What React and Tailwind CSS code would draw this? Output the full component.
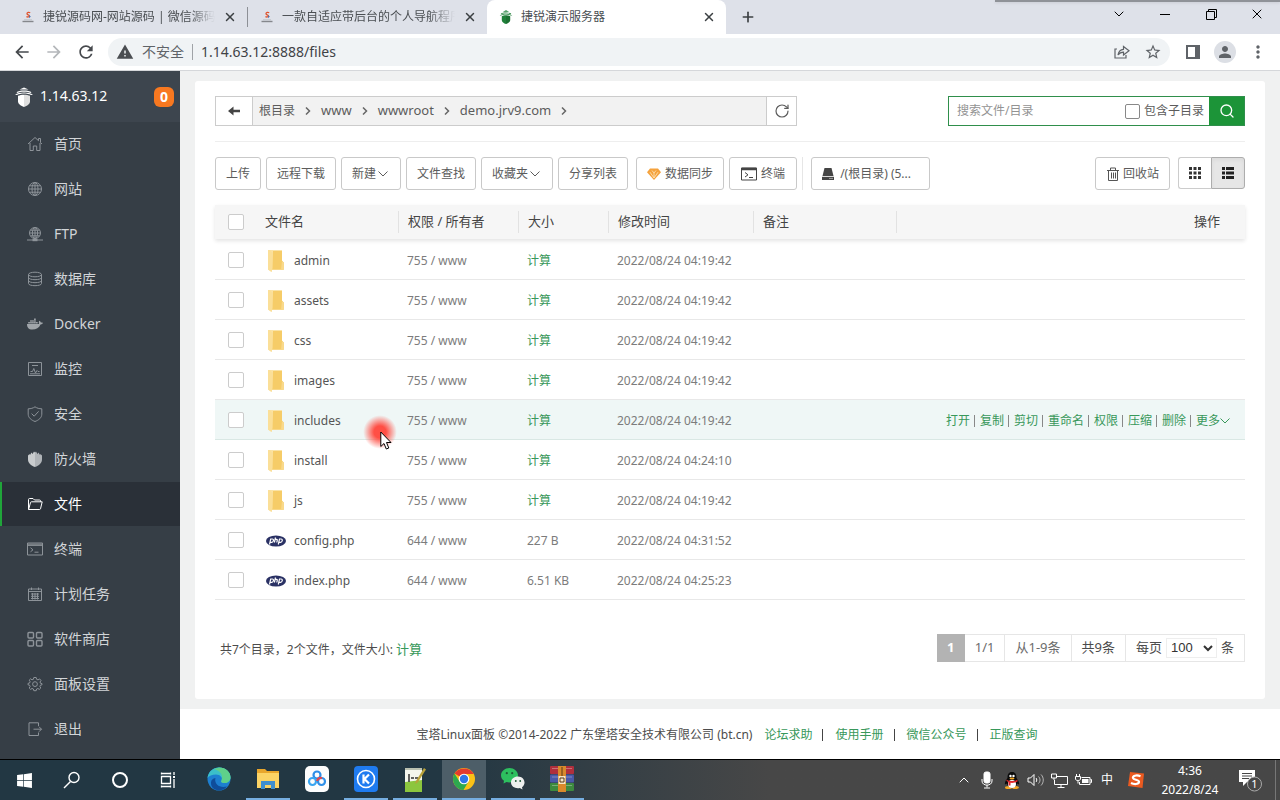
import { useState } from "react";
import { FaDocker, FaWindows } from "react-icons/fa";
import {
  MdArrowBack,
  MdArrowForward,
  MdRefresh,
  MdWarning,
  MdStarBorder,
  MdPerson,
  MdMoreVert,
} from "react-icons/md";
import { ChevronDown, ChevronUp, Plus, RotateCw, Search, X } from "lucide-react";

/* ---------- data ---------- */

const menu = [
  { name: "首页", icon: "home" },
  { name: "网站", icon: "globe" },
  { name: "FTP", icon: "ftp" },
  { name: "数据库", icon: "database" },
  { name: "Docker", icon: "docker" },
  { name: "监控", icon: "monitor" },
  { name: "安全", icon: "shield" },
  { name: "防火墙", icon: "firewall" },
  { name: "文件", icon: "folder" },
  { name: "终端", icon: "terminal" },
  { name: "计划任务", icon: "calendar" },
  { name: "软件商店", icon: "apps" },
  { name: "面板设置", icon: "gear" },
  { name: "退出", icon: "exit" },
];

const files = [
  { name: "admin", dir: true, perm: "755 / www", time: "2022/08/24 04:19:42" },
  { name: "assets", dir: true, perm: "755 / www", time: "2022/08/24 04:19:42" },
  { name: "css", dir: true, perm: "755 / www", time: "2022/08/24 04:19:42" },
  { name: "images", dir: true, perm: "755 / www", time: "2022/08/24 04:19:42" },
  { name: "includes", dir: true, perm: "755 / www", time: "2022/08/24 04:19:42" },
  { name: "install", dir: true, perm: "755 / www", time: "2022/08/24 04:24:10" },
  { name: "js", dir: true, perm: "755 / www", time: "2022/08/24 04:19:42" },
  { name: "config.php", perm: "644 / www", size: "227 B", time: "2022/08/24 04:31:52" },
  { name: "index.php", perm: "644 / www", size: "6.51 KB", time: "2022/08/24 04:25:23" },
];

const actions = ["打开", "复制", "剪切", "重命名", "权限", "压缩", "删除", "更多"];
const path = ["根目录", "www", "wwwroot", "demo.jrv9.com"];
const footerLinks = ["论坛求助", "使用手册", "微信公众号", "正版查询"];

/* ---------- icons ---------- */

const menuPaths = {
  home: <path d="M1 8 8 1.5 11.5 4.7V2.5H13.5V6.6L15 8M3 7V14.5H6.3V10H9.7V14.5H13V7" />,
  globe: (
    <>
      <circle cx="8" cy="8" r="6.5" />
      <ellipse cx="8" cy="8" rx="3" ry="6.5" />
      <path d="M8 1.5V14.5M1.5 8H14.5M2.5 4.8H13.5M2.5 11.2H13.5" />
    </>
  ),
  ftp: (
    <>
      <circle cx="8" cy="7" r="5.5" />
      <ellipse cx="8" cy="7" rx="2.6" ry="5.5" />
      <path d="M8 1.5V12.5M2.5 7H13.5M3.5 4.2H12.5M3.5 9.8H12.5M0 14H16" />
      <path d="M5.5 14H10.5" strokeWidth="2.4" />
    </>
  ),
  database: (
    <>
      <ellipse cx="8" cy="3.5" rx="6.5" ry="2.3" />
      <path d="M1.5 3.5V12.5C1.5 15.4 14.5 15.4 14.5 12.5V3.5M1.5 6.5C1.5 9.4 14.5 9.4 14.5 6.5M1.5 9.5C1.5 12.4 14.5 12.4 14.5 9.5" />
    </>
  ),
  monitor: <path d="M1.5 1.5H14.5V14.5H1.5ZM5 4.5H11M3.500 10.500H5.500L6.800 7.500 8.500 12 10 9.500 11 10.500H12.500M3 12.800H13" />,
  shield: <path d="M8 .8C6 2.200 3.800 2.800 1.200 2.800V8.200C1.200 11.800 4.500 14.200 8 15.500 11.500 14.200 14.800 11.800 14.800 8.200V2.800C12.200 2.800 10 2.200 8 .8ZM4.600 7.600 7.200 10.200 11.600 5.400" />,
  firewall: (
    <g stroke="none">
      <path fill="#c9ccce" d="M1 4.500 2.500 3 3 4 4.500 1.500 5.500 3 7 .5 8 1.500V16C4 14.500 1 12 1 8.500Z" />
      <path fill="#b0b4b8" d="M15 4.500 13.500 3 13 4 11.500 1.500 10.500 3 9 .5 8 1.500V16C12 14.500 15 12 15 8.500Z" />
    </g>
  ),
  folder: <path d="M1.5 13.500V3.500C1.500 2.800 2 2.500 2.500 2.500H6L7.500 4H12.500C13.300 4 13.600 4.500 13.600 5V5.800M1.600 13.500 3.500 6.500C3.700 6 4 5.800 4.500 5.800H15.200L13.500 12.800C13.300 13.300 13 13.500 12.500 13.500Z" />,
  terminal: <path d="M.5 2H15.500V14H.5ZM.5 3.200H15.500M.5 4.400H15.500M3.500 6.800 6 8.800 3.500 10.800M7.500 11.200H11.500" />,
  calendar: <path d="M1.500 3H14.500V14.500H1.500ZM1.500 5.500H14.500M4.500 1.500V4M11.500 1.500V4M4 8H12M4 10.300H12M4 12.500H12M5.500 7V13.500M8 7V13.500M10.500 7V13.500" />,
  apps: (
    <g strokeWidth="1.4">
      <rect x="1" y="1.500" width="5.500" height="5.500" rx="1" />
      <rect x="9.500" y="1.500" width="5.500" height="5.500" rx="1" />
      <rect x="1" y="9.500" width="5.500" height="5.500" rx="1" />
      <rect x="9.500" y="9.500" width="5.500" height="5.500" rx="1" />
    </g>
  ),
  gear: (
    <>
      <path d="M6.800 1.500H9.200L9.600 3.300 11 3.900 12.600 2.900 14 4.500 13 6 13.400 7.200 15 7.600V8.800L13.400 9.200 12.900 10.500 13.800 12 12.300 13.400 10.900 12.500 9.600 13 9.200 14.700H6.800L6.400 13 5 12.500 3.600 13.400 2.200 12 3.100 10.500 2.600 9.200 1 8.800V7.400L2.600 7 3.100 5.600 2.200 4.200 3.600 2.800 5 3.800 6.400 3.300Z" />
      <circle cx="8" cy="8.100" r="2.400" />
    </>
  ),
  exit: <path d="M11.500 5V1.800H2V14.500H11.500V11.500M6.500 8.200H14.500M12 5.700 14.500 8.200 12 10.700" />,
};

const MenuIcon = ({ name }) => {
  if (name === "docker") return <FaDocker className="size-4 shrink-0 text-[#a0a5aa]" />;
  return (
    <svg
      viewBox="0 0 16 16"
      fill="none"
      stroke="currentColor"
      strokeWidth="1"
      className="size-4 shrink-0"
    >
      {menuPaths[name]}
    </svg>
  );
};

const Logo = ({ className }) => (
  <svg viewBox="0 0 18 20" className={className} fill="currentColor">
    <path d="M9 .5 13.500 2.600H4.500Z" />
    <path d="M1.500 5.200C4 2.900 14 2.900 16.500 5.200L15.500 5.900C13 4.300 5 4.300 2.500 5.900Z" />
    <path d="M0 7.800C4 4.600 14 4.600 18 7.800L16 8C12.500 6 5.500 6 2 8Z" />
    <path d="M3 8.800C6 7.300 12 7.300 15 8.800V14.500C15 16.800 12 18.900 9 20 6 18.900 3 16.800 3 14.500Z" />
    <path d="M9 7.700V20C12 18.900 15 16.800 15 14.500V8.800C13 7.900 11 7.700 9 7.700Z" fill="#000" opacity=".12" />
  </svg>
);

const SiteIcon = () => (
  <svg viewBox="0 0 14 14" className="size-3.5 shrink-0">
    <path d="M9.200 2.800C8 2 6 2.300 6 3.700 6 4.900 8.400 4.700 8.400 6 8.300 7.200 6.700 7.200 5.400 6.600" fill="none" stroke="#e0532c" strokeWidth="1.300" />
    <path d="M8.200 5.200 9.800 6.500 8.200 8.200Z" fill="#3b6fb5" />
    <path d="M1.500 11.500H12.500" stroke="#85878c" strokeWidth="1.400" />
    <path d="M3 9.800H11" stroke="#b8babf" strokeWidth=".8" />
  </svg>
);

const FolderIcon = () => (
  <svg viewBox="0 0 16 22" className="h-[22px] w-4 shrink-0">
    <path d="M0 0H14V11L16 12.500V20H4L3.500 22 0 19.500Z" fill="#fae3a6" />
    <path d="M5 1H14V10.500L15.500 12.500V19.500H4Z" fill="#f6cc68" />
    <path d="M14 11 15.800 12.500V19.500H13Z" fill="#f9d98b" />
    <path d="M0 0H2L4.500 2.500V18L3.500 22 0 19.500Z" fill="#fbdf98" />
  </svg>
);

const PhpIcon = () => (
  <svg viewBox="0 0 20 12" className="h-3 w-5 shrink-0">
    <ellipse cx="10" cy="6" rx="10" ry="5.500" fill="#2a3164" />
    <g fill="none" stroke="#fff" strokeWidth="1.200">
      <path d="M3.500 9.500 4.700 4H6.300C8.300 4 7.500 7.300 5.800 7.300H4.200" />
      <path d="M9.500 2.500 8.400 7.500M9.100 4.300H10.600C11.700 4.300 11.200 5.500 10.800 7.500" />
      <path d="M12.300 9.500 13.500 4H15.100C17.100 4 16.300 7.300 14.600 7.300H13" />
    </g>
  </svg>
);

const TerminalIcon = () => (
  <svg viewBox="0 0 16 14" className="h-3.5 w-4" fill="none" stroke="#444">
    <path d="M.5 1H15.500V13H.5Z" />
    <path d="M.5 2H15.500" strokeWidth="2.500" />
    <path d="M4 5.500 7 7.800 4 10M8 10.500H12" />
  </svg>
);

const DiamondIcon = () => (
  <svg viewBox="0 0 14 12" className="h-3 w-3.5">
    <path d="M3 .5H11L14 4.200 7 12 0 4.200Z" fill="#f5a23c" />
    <path d="M3 4.200 7 10 11 4.200M5 2.500 7 5 9 2.500M7 5V10" fill="none" stroke="#fce0b4" strokeWidth=".9" />
  </svg>
);

const DiskIcon = () => (
  <svg viewBox="0 0 12 12" className="size-3" fill="#444">
    <path d="M2.500 0H9.500L11.500 8H.5Z" />
    <path d="M0 8.800H12V12H0Z" />
    <path d="M7.500 10.400H8.500M9.500 10.400H10.500" stroke="#fff" />
  </svg>
);

const TrashIcon = () => (
  <svg viewBox="0 0 12 14" className="h-3.5 w-3" fill="none" stroke="#555">
    <path d="M0 3.500H12M3.500 3.500V1H8.500V3.500M1.500 3.500V13.500H10.500V3.500M4.500 5.500V11.500M6.500 5.500V11.500M8.500 5.500V11.500" />
  </svg>
);

const GridIcon = () => (
  <svg viewBox="0 0 12 12" className="size-3" fill="#333">
    <path d="M0 0H3V3H0ZM4.500 0H7.500V3H4.500ZM9 0H12V3H9ZM0 4.500H3V7.500H0ZM4.500 4.500H7.500V7.500H4.500ZM9 4.500H12V7.500H9ZM0 9H3V12H0ZM4.500 9H7.500V12H4.500ZM9 9H12V12H9Z" />
  </svg>
);

const ListIcon = () => (
  <svg viewBox="0 0 12 12" className="size-3" fill="#222">
    <path d="M0 0H3V3H0ZM4 0H12V3H4ZM0 4.500H3V7.500H0ZM4 4.500H12V7.500H4ZM0 9H3V12H0ZM4 9H12V12H4Z" />
  </svg>
);

const BackIcon = () => (
  <svg viewBox="0 0 12 10" className="h-2.5 w-3" fill="#444">
    <path d="M0 5 5.500 .5V3.800H12V6.200H5.500V9.500Z" />
  </svg>
);

/* ---------- browser ---------- */

const Tab = ({ title, active, icon, line }) => (
  <div
    className={`flex w-[239px] items-center pr-2.5 pl-3 ${
      active ? "rounded-t-lg bg-white" : line ? "border-r border-[#8d9096]" : ""
    } ${active ? "h-[34px]" : "h-5"}`}
  >
    {icon}
    <span
      className={`ml-2 flex-1 overflow-hidden text-xs whitespace-nowrap text-[#4a4e52] ${
        active ? "" : "mask-r-from-85%"
      }`}
    >
      {title}
    </span>
    <button aria-label="关闭标签页" className="ml-2 text-[#3c4043]">
      <X className="size-3.5" strokeWidth={2.5} />
    </button>
  </div>
);

const Browser = () => (
  <header>
    <div className="relative flex h-[34px] items-end bg-[#dee1e9] pl-[9px]">
      <div className="flex h-[34px] min-w-0 items-center">
        <Tab title="捷锐源码网-网站源码 | 微信源码" icon={<SiteIcon />} line />
        <Tab title="一款自适应带后台的个人导航程序" icon={<SiteIcon />} />
        <Tab
          title="捷锐演示服务器"
          icon={<Logo className="h-3.5 w-3.5 shrink-0 text-[#20803a]" />}
          active
        />
        <button aria-label="新标签页" className="ml-3.5 text-[#3c4043]">
          <Plus className="size-4" strokeWidth={2.5} />
        </button>
      </div>
      <div className="mb-2 ml-auto flex h-6 items-center text-black">
        <button aria-label="搜索标签页" className="flex w-[46px] justify-center">
          <ChevronDown className="size-4" strokeWidth={1.5} />
        </button>
        <button aria-label="最小化" className="flex w-[46px] justify-center">
          <span className="h-px w-2.5 bg-black" />
        </button>
        <button aria-label="还原" className="flex w-[46px] justify-center">
          <svg viewBox="0 0 11 11" className="size-[11px]" fill="none" stroke="currentColor">
            <path d="M.5 2.500H8.500V10.500H.5ZM2.500 2.500V.5H10.500V8.500H8.500" />
          </svg>
        </button>
        <button aria-label="关闭" className="flex w-[46px] justify-center">
          <X className="size-4" strokeWidth={1.5} />
        </button>
      </div>
      <div className="absolute top-0 right-0 h-0.5 w-[285px] bg-[#8f9298] shadow-sm" />
    </div>

    <div className="flex h-[37px] items-center border-b border-[#d5d7da] bg-white pr-3 pl-3 text-[#5f6368]">
      <div className="flex gap-3">
        <button aria-label="后退" className="text-[#46494d]">
          <MdArrowBack className="size-5" />
        </button>
        <button aria-label="前进" className="text-[#b4b7ba]">
          <MdArrowForward className="size-5" />
        </button>
        <button aria-label="重新加载" className="text-[#46494d]">
          <MdRefresh className="size-5" />
        </button>
      </div>
      <div className="ml-3 flex h-7 flex-1 items-center rounded-full bg-[#f0f3f5] px-2 text-sm">
        <MdWarning className="size-[18px] text-[#4a4d51]" />
        <span className="ml-2">不安全</span>
        <span className="mx-2 h-4 w-px bg-[#a0a3a7]" />
        <input
          aria-label="地址栏"
          defaultValue="1.14.63.12:8888/files"
          className="min-w-0 flex-1 bg-transparent text-[#3f4246] outline-none"
        />
        <button aria-label="分享" className="mr-3.5">
          <svg viewBox="0 0 16 14" className="h-3.5 w-4" fill="none" stroke="currentColor" strokeWidth="1.200">
            <path d="M3 4H1V13H12V10" />
            <path d="M4 10C4.500 6.500 6.500 4.500 9.500 4.300V1.500L15 5.800 9.500 10V7.200C7 7.200 5.500 8 4 10Z" />
          </svg>
        </button>
        <button aria-label="收藏">
          <MdStarBorder className="size-[18px]" />
        </button>
      </div>
      <button aria-label="侧边栏" className="ml-4">
        <svg viewBox="0 0 14 14" className="size-3.5" fill="currentColor">
          <path d="M0 0H14V14H0ZM2 2V12H9V2Z" fillRule="evenodd" />
        </svg>
      </button>
      <button
        aria-label="用户"
        className="ml-3.5 flex size-[22px] items-center justify-center rounded-full bg-[#dcdfe5]"
      >
        <MdPerson className="size-[18px]" />
      </button>
      <button aria-label="更多" className="ml-3">
        <MdMoreVert className="size-5" />
      </button>
    </div>
  </header>
);

/* ---------- panel ---------- */

const Sidebar = () => (
  <aside className="w-[180px] shrink-0 bg-[#363e46]">
    <div className="flex h-[51px] items-center bg-[#3d454e] pr-1.5 pl-[15px]">
      <Logo className="h-5 w-[18px] text-white" />
      <span className="ml-[7px] pb-0.5 text-sm text-white">1.14.63.12</span>
      <span className="ml-auto flex size-5 items-center justify-center rounded-md bg-[#f87820] text-sm font-bold text-white">
        0
      </span>
    </div>
    <nav>
      {menu.map((item) => {
        const on = item.name === "文件";
        return (
          <a
            key={item.name}
            href="#"
            className={`mb-px flex h-11 items-center gap-[11px] border-l-2 pl-[25px] text-sm ${
              on ? "border-[#20a53a] bg-[#2a3038] text-white" : "border-transparent text-[#d2d5d8]"
            }`}
          >
            <span className={on ? "text-white" : "text-[#8d9399]"}>
              <MenuIcon name={item.icon} />
            </span>
            {item.name}
          </a>
        );
      })}
    </nav>
  </aside>
);

const Btn = ({ children, className = "px-2.5" }) => (
  <button
    className={`flex h-[33px] shrink-0 items-center rounded-[3px] border border-[#c9c9c9] bg-white text-xs whitespace-nowrap text-[#5c5c5c] ${className}`}
  >
    {children}
  </button>
);

const Check = ({ label }) => (
  <input
    type="checkbox"
    aria-label={label}
    className="block size-4 appearance-none rounded-[2px] border border-[#ccc] bg-white checked:bg-[#20a53a]"
  />
);

const PathBar = () => (
  <div className="flex items-center justify-between border-b border-[#eee] pb-[15px]">
    <div className="flex h-[30px] w-[582px] border border-[#ccc] text-[#5c5c5c]">
      <button aria-label="返回上一级" className="flex w-[37px] items-center justify-center border-r border-[#ccc]">
        <BackIcon />
      </button>
      <div className="flex flex-1 items-center bg-[#f2f2f2] pl-1.5 text-xs">
        {path.map((p) => (
          <span key={p} className="flex items-center">
            <a href="#" className={p === "根目录" ? "" : "text-[13px]"}>
              {p}
            </a>
            <svg viewBox="0 0 6 8" className="mx-2.5 h-2 w-1.5" fill="none" stroke="#666" strokeWidth="1.500">
              <path d="M1 .5 4.500 4 1 7.500" />
            </svg>
          </span>
        ))}
      </div>
      <button aria-label="刷新" className="flex w-[30px] items-center justify-center border-l border-[#ccc]">
        <RotateCw className="size-4" strokeWidth={1.8} />
      </button>
    </div>

    <div className="flex h-[30px] w-[297px] border border-[#2f8f4b] text-xs">
      <input
        type="text"
        aria-label="搜索"
        placeholder="搜索文件/目录"
        className="min-w-0 flex-1 pl-2 outline-none placeholder:text-[#939393]"
      />
      <label className="flex items-center gap-1 pr-[5px] text-[#5c5c5c]">
        <input
          type="checkbox"
          className="size-[15px] appearance-none rounded-[2px] border border-[#888] bg-white checked:bg-[#20a53a]"
        />
        包含子目录
      </label>
      <button aria-label="查找" className="flex w-[35px] items-center justify-center bg-[#1c9438] text-white">
        <Search className="size-4" strokeWidth={2} />
      </button>
    </div>
  </div>
);

const Arrow = () => (
  <svg viewBox="0 0 10 6" className="h-1.5 w-2.5" fill="none" stroke="currentColor">
    <path d="M.5 .5 5 5 9.500 .5" />
  </svg>
);

const Toolbar = () => (
  <div className="flex items-center justify-between pt-[15px]">
    <div className="flex gap-[5px]">
      <Btn>上传</Btn>
      <Btn>远程下载</Btn>
      <Btn className="gap-0.5 pr-3 pl-2.5">
        新建
        <Arrow />
      </Btn>
      <Btn>文件查找</Btn>
      <Btn className="gap-0.5 pr-3 pl-2.5">
        收藏夹
        <Arrow />
      </Btn>
      <Btn>分享列表</Btn>
      <div className="ml-[3px] flex gap-[5px] border-r border-[#e6e6e6] pr-[5px]">
        <Btn className="gap-1 px-2.5">
          <DiamondIcon />
          数据同步
        </Btn>
        <Btn className="gap-1 px-[11px]">
          <TerminalIcon />
          终端
        </Btn>
      </div>
      <Btn className="ml-[3px] w-[119px] gap-1.5 px-2.5">
        <DiskIcon />
        /(根目录) (5...
      </Btn>
    </div>
    <div className="flex gap-2">
      <Btn className="gap-1 pr-2.5 pl-[11px]">
        <TrashIcon />
        回收站
      </Btn>
      <div className="flex">
        <button
          aria-label="图标视图"
          className="flex h-8 w-[33px] items-center justify-center rounded-l-[3px] border border-r-0 border-[#ccc]"
        >
          <GridIcon />
        </button>
        <button
          aria-label="列表视图"
          className="flex h-8 w-[34px] items-center justify-center rounded-r-[3px] border border-[#adadad] bg-[#e6e6e6] inset-shadow-sm"
        >
          <ListIcon />
        </button>
      </div>
    </div>
  </div>
);

const Head = ({ children }) => (
  <th className="p-0 font-normal">
    <div className="flex h-[22px] items-center border-r border-[#e2e2e2] pl-[9px]">{children}</div>
  </th>
);

const FileTable = () => (
  <table className="mt-[15px] w-full table-fixed border-collapse text-left">
    <colgroup>
      <col className="w-[41px]" />
      <col className="w-[143px]" />
      <col className="w-[120px]" />
      <col className="w-[90px]" />
      <col className="w-[145px]" />
      <col className="w-[143px]" />
      <col />
    </colgroup>
    <thead className="bg-[#f6f6f6] text-[13px] text-[#444] shadow-[0_2px_4px_#e4e4e4]">
      <tr className="h-[34px]">
        <th className="p-0 pl-[13px]">
          <Check label="全选" />
        </th>
        <Head>文件名</Head>
        <Head>权限 / 所有者</Head>
        <Head>大小</Head>
        <Head>修改时间</Head>
        <Head>备注</Head>
        <th className="p-0 pr-[25px] text-right font-normal">操作</th>
      </tr>
    </thead>
    <tbody className="text-xs text-[#7c7c7c]">
      {files.map((f) => {
        const hover = f.name === "includes";
        return (
          <tr
            key={f.name}
            className={`h-10 border-b ${hover ? "border-[#d9e8e4] bg-[#eff7f6]" : "border-[#e8e8e8]"}`}
          >
            <td className="p-0 pt-0.5 pl-[13px]">
              <Check label={f.name} />
            </td>
            <td className="p-0 pt-1 pl-2.5">
              <a href="#" className="flex items-center gap-2 text-[#555]">
                <span className="flex w-5 justify-center">{f.dir ? <FolderIcon /> : <PhpIcon />}</span>
                {f.name}
              </a>
            </td>
            <td className="p-0 pt-1 pl-2">{f.perm}</td>
            <td className="p-0 pt-1 pl-2">
              {f.dir ? (
                <a href="#" className="text-[#38985a]">
                  计算
                </a>
              ) : (
                f.size
              )}
            </td>
            <td className="p-0 pt-1 pl-2 whitespace-nowrap">{f.time}</td>
            <td className="p-0"></td>
            <td className="p-0 pt-1 pr-[15px]">
              {hover && (
                <div className="flex items-center justify-end whitespace-nowrap">
                  {actions.map((a, i) => (
                    <span key={a} className="flex items-center text-[#38985a]">
                      {i > 0 && <span className="mr-[5px] ml-1 h-3 w-px bg-[#888]" />}
                      <a href="#" className="flex items-center">
                        {a}
                        {a === "更多" && <Arrow />}
                      </a>
                    </span>
                  ))}
                </div>
              )}
            </td>
          </tr>
        );
      })}
    </tbody>
  </table>
);

const Pager = () => {
  const [size, setSize] = useState("100");

  return (
    <div className="flex h-7 border border-[#e6e6e6] text-[13px] text-[#4c4c4c]">
      <span className="-my-px -ml-px flex w-7 items-center justify-center bg-[#b3b3b3] font-bold text-white">1</span>
      <span className="flex items-center border-r border-[#e6e6e6] px-2.5 text-[#6c6c6c]">1/1</span>
      <span className="flex items-center border-r border-[#e6e6e6] px-2.5 text-[#6c6c6c]">从1-9条</span>
      <span className="flex items-center border-r border-[#e6e6e6] px-2.5">共9条</span>
      <label className="flex items-center gap-1 px-2.5">
        每页
        <select
          value={size}
          onChange={(e) => setSize(e.target.value)}
          className="h-5 w-[51px] border border-[#eee] bg-white font-['Liberation_Sans',sans-serif] text-[13px] leading-4 text-[#333]"
        >
          <option>100</option>
          <option>200</option>
          <option>500</option>
        </select>
        条
      </label>
    </div>
  );
};

const Main = () => (
  <main className="flex min-w-0 flex-1 flex-col bg-[#f0f1f1]">
    <div className="mx-[15px] mt-2.5 mb-2.5 flex-1 rounded-[3px] bg-white px-5 py-[15px]">
      <PathBar />
      <Toolbar />
      <FileTable />
      <div className="mt-[34px] flex items-center justify-between pl-[5px]">
        <p className="pt-1 text-xs text-[#4c4c4c]">
          共7个目录，2个文件，文件大小:{" "}
          <a href="#" className="text-[13px] text-[#38985a]">
            计算
          </a>
        </p>
        <Pager />
      </div>
    </div>
    <footer className="flex h-[50px] items-center justify-center bg-white pt-0.5 pr-1.5 text-xs text-[#4c4c4c]">
      <span>宝塔Linux面板 ©2014-2022 广东堡塔安全技术有限公司 (bt.cn)</span>
      {footerLinks.map((l, i) => (
        <span key={l} className="flex items-center">
          {i > 0 && <span className="ml-2.5 h-3 w-px bg-[#444]" />}
          <a href="#" className="ml-3 text-[#38985a]">
            {l}
          </a>
        </span>
      ))}
    </footer>
  </main>
);

/* ---------- taskbar ---------- */

const EdgeIcon = () => (
  <svg viewBox="0 0 24 24" className="size-6">
    <circle cx="12" cy="12" r="11.500" fill="#1d7fd0" />
    <path d="M.5 11C1.500 4 6.500.5 12 .5 19 .5 23.500 5 23.500 10.500 23.500 14 20.500 16 17.500 16 14.500 16 13.500 15 14.500 13.500 16 10.500 13 7.500 9 7.500 5 7.500 2 9 .5 11Z" fill="#3bbfc9" />
    <path d="M12 .5C19 .5 23.500 5 23.500 10.500 23.500 14 20.500 16 17.500 16 14.500 16 13.500 15 14.500 13.500 16.500 9 14 4 7 2Z" fill="#5fd08a" />
    <path d="M8.500 11C7 16 11 21.500 20 19.500 15 26 3.500 24 4 15.500 4 13 6 11.500 8.500 11Z" fill="#0f4d9a" />
  </svg>
);

const ExplorerIcon = () => (
  <svg viewBox="0 0 22 20" className="h-5 w-[22px]">
    <path d="M0 0H8L10 2H22V18H0Z" fill="#e8a62c" />
    <path d="M0 4H22V19H0Z" fill="#fbd365" />
    <path d="M4 20V12H18V20H14V16H8V20Z" fill="#3f8fd0" />
  </svg>
);

const NetdiskIcon = () => (
  <svg viewBox="0 0 24 26" className="h-[26px] w-6">
    <rect width="24" height="26" rx="5" fill="#fdfdfd" />
    <g fill="none" strokeWidth="2.200">
      <circle cx="12" cy="9" r="3.500" stroke="#2e8fe8" />
      <circle cx="7.500" cy="15.500" r="3.500" stroke="#3aa5f0" />
      <circle cx="16.500" cy="15.500" r="3.500" stroke="#2e8fe8" />
      <path d="M12 15C12.800 12.500 15 11.500 17 12.100" stroke="#e0484e" />
    </g>
  </svg>
);

const KIcon = () => (
  <svg viewBox="0 0 24 26" className="h-[26px] w-6">
    <rect width="24" height="26" rx="4" fill="#1f7bf0" />
    <circle cx="12" cy="13" r="8.500" fill="none" stroke="#fff" strokeWidth="1.600" />
    <path d="M9.500 8.500V17.500M15 8.500 10.500 13 15 17.500" fill="none" stroke="#fff" strokeWidth="2.200" />
  </svg>
);

const NotepadIcon = () => (
  <svg viewBox="0 0 22 26" className="h-[26px] w-[22px]">
    <path d="M1 2H18V26H1Z" fill="#f4f6ee" />
    <path d="M1 16 18 14V26H1Z" fill="#8cc63e" />
    <path d="M1 2H18V4H1Z" fill="#b9c0b0" />
    <path d="M5 8V16M7 12H10M11 12H14" stroke="#333" strokeWidth="1.500" />
    <path d="M20 2 12 15 11 18 14 16 22 3.500Z" fill="#b8a13a" />
  </svg>
);

const ChromeIcon = () => (
  <svg viewBox="0 0 24 24" className="size-6">
    <circle cx="12" cy="12" r="11" fill="#fbc116" />
    <path d="M12 12 2.500 6.500C6 .2 17.500-1 21.800 7H12Z" fill="#e33b2e" />
    <path d="M2.500 6.500C-1.500 13.500 3 22.500 11.500 23L16.500 14.500 12 12 7.500 14.500Z" fill="#2da94f" />
    <circle cx="12" cy="12" r="5.300" fill="#fff" />
    <circle cx="12" cy="12" r="4.200" fill="#2f76e8" />
  </svg>
);

const WechatIcon = () => (
  <svg viewBox="0 0 24 24" className="size-6">
    <path d="M8.500 1C4 1 0 4.300 0 8.300 0 10.600 1.200 12.500 3 13.800L2.500 16.500 5.500 15C10.500 16.500 17 13.500 17 8.300 17 4.300 13 1 8.500 1Z" fill="#2dbf5f" />
    <path d="M17 9.500C13 9.500 10 12 10 15.500 10 19.500 14.500 22 18.800 21L21.500 22.500 21 20.200C26 16.500 23 9.500 17 9.500Z" fill="#eef0ef" />
    <g fill="#1d5a35">
      <circle cx="5.800" cy="6.200" r="1.100" />
      <circle cx="11.200" cy="6.200" r="1.100" />
      <circle cx="14.800" cy="14" r=".9" />
      <circle cx="19.200" cy="14" r=".9" />
    </g>
  </svg>
);

const WinrarIcon = () => (
  <svg viewBox="0 0 24 26" className="h-[26px] w-6">
    <rect y="0" width="24" height="8" rx="1" fill="#b02f3c" />
    <rect y="8.500" width="24" height="8" rx="1" fill="#4a58a8" />
    <rect y="17" width="24" height="8" rx="1" fill="#3d8a3f" />
    <path d="M2 2.500H22M2 11H22M2 19.500H22" stroke="#fff" opacity=".3" />
    <rect x="8" width="8" height="26" fill="#d9892b" />
    <path d="M8.500 10H15.500V18H8.500Z" fill="#f3e6c9" />
    <path d="M10 12H14V16H10ZM12 1V10" fill="none" stroke="#5a3a18" />
  </svg>
);

const TaskSearch = () => (
  <svg viewBox="0 0 18 18" className="size-[18px]" fill="none" stroke="#fff" strokeWidth="1.400">
    <circle cx="11" cy="6.500" r="5" />
    <path d="M7.500 10.500 1 17" />
  </svg>
);

const TaskView = () => (
  <svg viewBox="0 0 16 16" className="size-4" fill="none" stroke="#fff" strokeWidth="1.300">
    <path d="M1.500 4.500H10.500V11.500H1.500ZM1.500 2.500V.5M1.500 1.500H10.500M10.500 2.500V.5M1.500 13.500V15.500M1.500 14.500H10.500M10.500 13.500V15.500M14 0V3M14 7V16" />
    <path d="M13 5H15" strokeWidth="2" />
  </svg>
);

const systemApps = [
  { name: "开始", icon: <FaWindows className="size-[17px]" /> },
  { name: "搜索", icon: <TaskSearch /> },
  { name: "Cortana", icon: <span className="size-4 rounded-full border-2 border-white" /> },
  { name: "任务视图", icon: <TaskView /> },
];

const apps = [
  { name: "Edge", icon: <EdgeIcon /> },
  { name: "文件资源管理器", icon: <ExplorerIcon />, open: true },
  { name: "网盘", icon: <NetdiskIcon /> },
  { name: "K", icon: <KIcon />, open: true },
  { name: "Notepad++", icon: <NotepadIcon />, open: true },
  { name: "Chrome", icon: <ChromeIcon />, open: true, active: true },
  { name: "微信", icon: <WechatIcon />, open: true },
  { name: "WinRAR", icon: <WinrarIcon />, open: true },
];

const Tray = () => (
  <div className="ml-auto flex h-full items-center text-white">
    <ChevronUp className="size-4" strokeWidth={1.5} />
    <svg viewBox="0 0 12 18" className="ml-[9px] h-[18px] w-3" fill="none" stroke="#fff">
      <rect x="3" y="1" width="6" height="11" rx="2" fill="#fff" />
      <path d="M1 8V10C1 15.500 11 15.500 11 10V8M6 14V16.500M3 17H9" />
    </svg>
    <svg viewBox="0 0 16 17" className="ml-[11px] h-[17px] w-4">
      <ellipse cx="4.500" cy="15.500" rx="3.500" ry="1.500" fill="#f5a623" />
      <ellipse cx="11.500" cy="15.500" rx="3.500" ry="1.500" fill="#f5a623" />
      <path d="M8 0C4.500 0 3.500 2.500 3.500 6 1.500 8.500.5 11 1 12.500L3 11.500C3.500 17 12.500 17 13 11.500L15 12.500C15.500 11 14.500 8.500 12.500 6 12.500 2.500 11.500 0 8 0Z" fill="#0b0b0b" />
      <ellipse cx="8" cy="12" rx="4" ry="4" fill="#fff" />
      <path d="M2.500 7.500C5 9.500 11 9.500 13.500 7.500V9.500C11 11 8 11 6.500 10.800V13.500H4.500V10C3.500 9.500 2.500 9 2.500 9Z" fill="#e0262b" />
      <circle cx="6.500" cy="4" r="1.200" fill="#fff" />
      <circle cx="9.500" cy="4" r="1.200" fill="#fff" />
      <ellipse cx="8" cy="6.500" rx="2.500" ry=".9" fill="#f5a623" />
    </svg>
    <svg viewBox="0 0 17 14" className="ml-[7px] h-3.5 w-[17px]" fill="none" stroke="#fff">
      <path d="M1 5H3.500L7 1.500V12.500L3.500 9H1Z" />
      <path d="M9 5C10 6 10 8 9 9" />
      <path d="M11.500 3.500C13.500 5.500 13.500 8.500 11.500 10.500M14 1.500C17 4.500 17 9.500 14 12.500" opacity=".6" />
    </svg>
    <svg viewBox="0 0 17 15" className="ml-[7px] h-[15px] w-[17px]" fill="none" stroke="#fff">
      <path d="M6 3.500H16.500V11.500H3.500V7M10 11.500V14M6.500 14.500H13.500M.5 1H5.500V5H.5ZM3 5V7" />
    </svg>
    <svg viewBox="0 0 17 13" className="ml-[7px] h-[13px] w-[17px]" fill="none" stroke="#fff">
      <path d="M6.500 3.500H15V10.500H4.500V8M15.500 5.500H16.500V8.500H15.500M1.500 0V2.500M4.500 0V2.500M.5 2.500H5.500V5C5.500 7 .5 7 .5 5ZM3 7V9.500" />
      <path d="M7 5H13.500V9H7Z" fill="#fff" stroke="none" />
    </svg>
    <span className="ml-[9px] text-xs">中</span>
    <svg viewBox="0 0 16 16" className="ml-[15px] size-4">
      <path d="M2 0 16 1.500 14.500 16 0 14Z" fill="#ea5a20" />
      <path d="M12.500 4.200C8 2.500 4.500 4 5 6 5.500 8 11.500 7.500 11 10 10.500 12.500 6 12.500 3 11" fill="none" stroke="#fff" strokeWidth="2.200" />
    </svg>
    <div className="ml-4 w-[60px] text-center text-xs leading-[19px] whitespace-nowrap">
      <div>4:36</div>
      <div>2022/8/24</div>
    </div>
    <svg viewBox="0 0 24 24" className="mr-3 ml-[19px] size-6">
      <path d="M0 2H16V14H8L4 18V14H0Z" fill="#fff" />
      <path d="M3 5.500H13M3 8H13M3 10.500H10" stroke="#474747" />
      <circle cx="15.500" cy="16" r="7" fill="#474747" stroke="#aaa" />
      <text x="15.500" y="20" fontSize="11" fill="#fff" textAnchor="middle">
        1
      </text>
    </svg>
    <span className="mr-1 h-full w-px bg-[#777]" />
  </div>
);

const Taskbar = () => (
  <div className="flex h-[41px] shrink-0 items-center border-t border-black bg-linear-to-r from-[#223743] from-35% to-[#474747] to-60%">
    <div className="flex h-full pr-0.5">
      {systemApps.map((a) => (
        <button key={a.name} aria-label={a.name} className="flex w-12 items-center justify-center text-white">
          {a.icon}
        </button>
      ))}
    </div>
    {apps.map((a) => (
      <button key={a.name} aria-label={a.name} className="flex h-full w-[49px] flex-col items-center">
        <span
          className={`flex w-11 flex-1 items-center justify-center border-b-2 ${a.active ? "bg-[#4d5e68]" : ""} ${
            a.open ? "border-[#76aee0]" : "border-transparent"
          }`}
        >
          {a.icon}
        </span>
      </button>
    ))}
    <Tray />
  </div>
);

const Pointer = () => (
  <div className="pointer-events-none absolute top-[415px] left-[363px] size-[34px] rounded-full bg-radial from-[#ff4f45] from-25% to-transparent to-70%">
    <svg viewBox="0 0 12 19" className="absolute top-4 left-[17px] h-[19px] w-3">
      <path d="M.8 1V15.500L4 12.500 6.300 18 8.800 17 6.500 11.500H11Z" fill="#fff" stroke="#000" />
    </svg>
  </div>
);

const App = () => {
  return (
    <div className="relative flex min-h-screen flex-col font-['Noto_Sans','Noto_Sans_CJK_SC',sans-serif]">
      <Browser />
      <div className="flex flex-1">
        <Sidebar />
        <Main />
      </div>
      <Taskbar />
      <Pointer />
    </div>
  );
};

export default App;
